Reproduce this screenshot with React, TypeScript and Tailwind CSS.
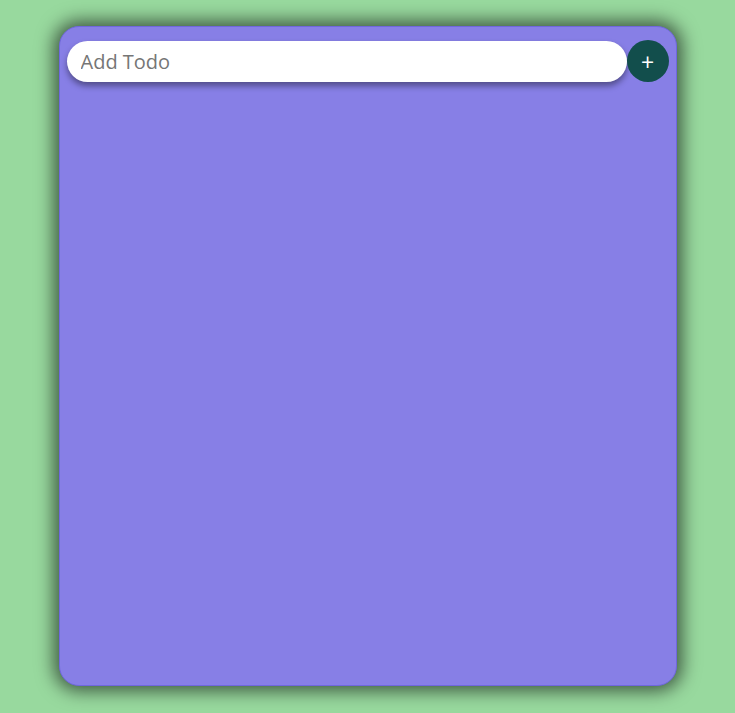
export default function App() {
  return (
    <div className="min-h-screen bg-[#98d99e] pt-[26px] font-['Open_Sans',sans-serif]">
      <div className="mx-auto h-[660px] w-[618px] rounded-[20px] border border-[#6f67dd] bg-[#877fe6] px-[7px] pt-[13px] shadow-[0_0_18px_5px_rgba(0,0,0,0.6)]">
        <div className="flex items-center">
          <input
            type="text"
            placeholder="Add Todo"
            className="h-[41px] flex-1 rounded-full bg-white px-[14px] text-[20px] text-gray-800 shadow-[0_4px_6px_rgba(0,0,0,0.4)] outline-none placeholder:text-[#767676]"
          />
          <button className="flex h-[42px] w-[42px] items-center justify-center rounded-full bg-[#124e4c] pt-[3px] text-[23px] leading-none text-white">
            +
          </button>
        </div>
      </div>
    </div>
  );
}
